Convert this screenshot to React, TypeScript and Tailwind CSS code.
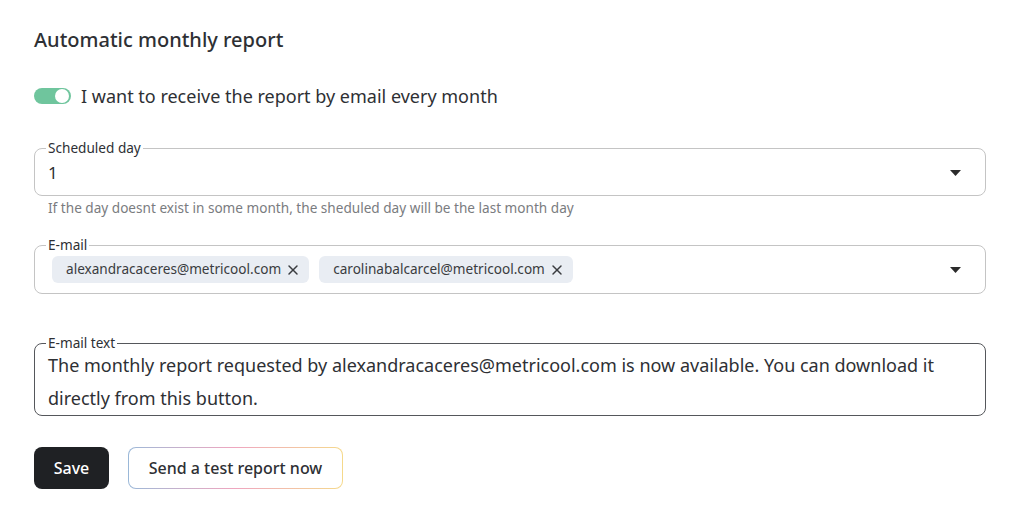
import { X } from "lucide-react";

const EMAILS = ["alexandracaceres@metricool.com", "carolinabalcarcel@metricool.com"];

function Caret() {
  return (
    <svg width="11" height="6" viewBox="0 0 11 6" className="shrink-0">
      <path d="M0 0h11L5.5 6z" fill="#2b2b2b" />
    </svg>
  );
}

export default function App() {
  return (
    <main
      className="min-h-screen bg-white pl-[34px] pr-[38px] pt-[26px] text-[#2e3034]"
      style={{ fontFamily: '"Noto Sans", "Open Sans", sans-serif' }}
    >
      <h1 className="text-[20px] font-medium leading-[28px]">Automatic monthly report</h1>

      {/* toggle */}
      <label className="mt-[30px] flex h-6 items-center gap-[10px]">
        <span className="flex h-[16px] w-[37px] items-center justify-end rounded-full bg-[#6fc59d] px-[2px]">
          <span className="size-[14px] rounded-full bg-white" />
        </span>
        <span className="text-[18px]">I want to receive the report by email every month</span>
      </label>

      {/* scheduled day */}
      <fieldset className="mt-[32px] flex h-[56px] items-start rounded-[8px] border border-[#c4c4c4] pl-[11px] pr-[24px]">
        <legend className="px-[2px] text-[13.6px] leading-[16px]">Scheduled day</legend>
        <div className="flex w-full items-center justify-between pt-[5px]">
          <span className="pl-[2px] text-[17px] leading-[24px]">1</span>
          <Caret />
        </div>
      </fieldset>
      <p className="mt-[4px] pl-[14px] text-[13.6px] leading-[16px] text-[#7a7c80]">
        If the day doesnt exist in some month, the sheduled day will be the last month day
      </p>

      {/* e-mail */}
      <fieldset className="mt-[21px] flex h-[57px] items-start rounded-[8px] border border-[#c4c4c4] pl-[11px] pr-[24px]">
        <legend className="px-[2px] text-[13.6px] leading-[16px]">E-mail</legend>
        <div className="flex w-full items-center justify-between pt-[3px]">
          <div className="flex gap-[10px] pl-[6px]">
            {EMAILS.map((e) => (
              <span
                key={e}
                className="flex h-[27px] items-center gap-[4px] rounded-[6px] bg-[#e9edf3] pl-[14px] pr-[8px] text-[13.6px] text-[#3a3c40]"
              >
                {e}
                <X className="size-[16px]" strokeWidth={2.2} />
              </span>
            ))}
          </div>
          <Caret />
        </div>
      </fieldset>

      {/* e-mail text */}
      <fieldset className="mt-[41px] rounded-[8px] border border-[#55575b] pl-[11px] pr-[24px]">
        <legend className="px-[2px] text-[13.6px] leading-[16px]">E-mail text</legend>
        <p className="-mt-[2px] pl-[2px] text-[18px] leading-[33px]">
          The monthly report requested by alexandracaceres@metricool.com is now available. You can download it
          directly from this button.
        </p>
      </fieldset>

      {/* actions */}
      <div className="mt-[31px] flex gap-[19px]">
        <button className="h-[42px] w-[75px] rounded-[8px] bg-[#1f2124] text-[16px] font-medium text-white">
          Save
        </button>
        <div className="rounded-[8px] bg-gradient-to-r from-[#9ab8d8] via-[#efa6bf] to-[#f5d98b] p-px">
          <button className="h-[40px] w-[213px] rounded-[7px] bg-white text-[16px] font-medium text-[#2e3034]">
            Send a test report now
          </button>
        </div>
      </div>
    </main>
  );
}
